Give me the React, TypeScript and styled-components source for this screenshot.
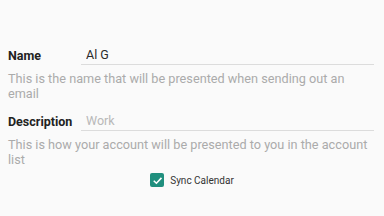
import React from "react";
import styled, { createGlobalStyle } from "styled-components";

const GlobalStyle = createGlobalStyle`
  html, body {
    margin: 0;
    padding: 0;
    background-color: #fafafa;
  }
  body {
    font-family: Roboto, "Noto Sans", sans-serif;
  }
`;

const Page = styled.div`
  width: 384px;
  height: 216px;
  box-sizing: border-box;
  padding: 41px 10px 0 8px;
  display: flex;
  flex-direction: column;
  background-color: #fafafa;
`;

const Field = styled.div<{ $gap?: number }>`
  display: flex;
  flex-direction: column;
  margin-top: ${(p) => p.$gap ?? 0}px;
`;

const Row = styled.div`
  display: flex;
  align-items: flex-end;
`;

const Label = styled.label`
  width: 73px;
  flex-shrink: 0;
  font-size: 12.5px;
  font-weight: 700;
  line-height: 14px;
  padding-bottom: 2px;
  color: #222;
`;

const TextInput = styled.input`
  flex: 1;
  min-width: 0;
  height: 24px;
  box-sizing: border-box;
  margin: 0;
  padding: 4px 0 0 5px;
  border: none;
  border-bottom: 1px solid #dcdcdc;
  background: transparent;
  outline: none;
  font-family: Roboto, "Noto Sans", sans-serif;
  font-size: 12.5px;
  color: #2a2a2a;

  &::placeholder {
    color: #b8b8b8;
  }
`;

const Help = styled.p`
  margin: 5.5px 0 0 0;
  font-size: 12.7px;
  line-height: 15px;
  color: #ababab;
`;

const CheckRow = styled.label`
  display: flex;
  align-items: center;
  justify-content: center;
  gap: 6px;
  margin-top: 6.5px;
  padding-left: 2px;
  font-size: 10px;
  color: #333;
`;

const Box = styled.span`
  width: 14px;
  height: 14px;
  border-radius: 2px;
  background-color: #208f7e;
  display: flex;
  align-items: center;
  justify-content: center;
`;

export default function App() {
  return (
    <>
      <GlobalStyle />
      <Page>
        <Field>
          <Row>
            <Label>Name</Label>
            <TextInput defaultValue="Al G" readOnly />
          </Row>
          <Help>
            This is the name that will be presented when sending out an email
          </Help>
        </Field>
        <Field $gap={6.5}>
          <Row>
            <Label>Description</Label>
            <TextInput placeholder="Work" readOnly />
          </Row>
          <Help>
            This is how your account will be presented to you in the account
            list
          </Help>
        </Field>
        <CheckRow>
          <Box>
            <svg width="11" height="11" viewBox="0 0 10 10">
              <path
                d="M1.6 5.2 L4 7.5 L8.6 2.6"
                fill="none"
                stroke="#fff"
                strokeWidth="1.4"
              />
            </svg>
          </Box>
          Sync Calendar
        </CheckRow>
      </Page>
    </>
  );
}
